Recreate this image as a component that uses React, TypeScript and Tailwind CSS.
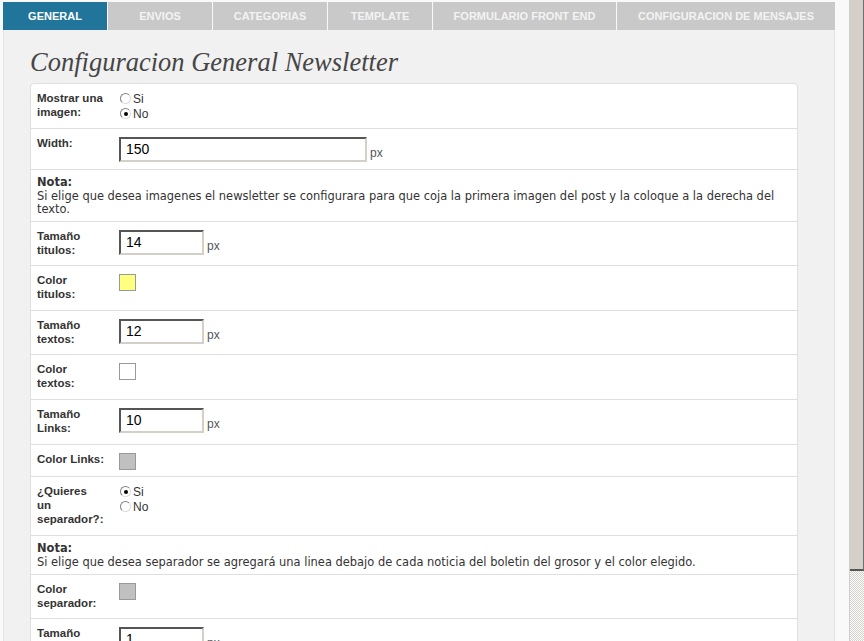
import React from "react";

const tabs: { label: string; w: string; active?: boolean }[] = [
  { label: "GENERAL", w: "w-[104px]", active: true },
  { label: "ENVIOS", w: "w-[104px]" },
  { label: "CATEGORIAS", w: "w-[114px]" },
  { label: "TEMPLATE", w: "w-[104px]" },
  { label: "FORMULARIO FRONT END", w: "w-[183px]" },
  { label: "CONFIGURACION DE MENSAJES", w: "w-[218px]" },
];

function Row({ h, label, children }: { h: string; label: React.ReactNode; children?: React.ReactNode }) {
  return (
    <div className={`flex border-b border-[#dfdfdf] ${h}`}>
      <div className="w-[88px] shrink-0 pl-[6px] pt-[7px] text-[11.5px] leading-[14px] font-bold text-[#333]">
        {label}
      </div>
      <div className="flex-1">{children}</div>
    </div>
  );
}

function TextInput({ value, w }: { value: string; w: string }) {
  return (
    <div className="flex items-end pt-[8px]">
      <div
        className={`${w} h-[25px] border-2 border-t-[#555] border-l-[#555] border-b-[#d4d0c8] border-r-[#d4d0c8] bg-white pl-[5px] text-[14px] leading-[21px] text-black`}
      >
        {value}
      </div>
      <span className="ml-[3px] mb-[2px] text-[12px] leading-[14px] text-[#555]">px</span>
    </div>
  );
}

function Swatch({ color }: { color: string }) {
  return (
    <div className="pt-[8px]">
      <div className={`w-[17px] h-[17px] border border-[#999] ${color}`} />
    </div>
  );
}

function Radio({ checked, label }: { checked?: boolean; label: string }) {
  return (
    <div className="flex items-center h-[15px] text-[12px] text-[#333]">
      <span className="ml-[1px] w-[11px] h-[11px] rounded-full border border-[#808080] border-b-[#ddd] border-r-[#ddd] bg-white flex items-center justify-center">
        {checked ? <span className="w-[4px] h-[4px] rounded-full bg-black" /> : null}
      </span>
      <span className="ml-[2px]">{label}</span>
    </div>
  );
}

function Nota({ h, lines }: { h: string; lines: string[] }) {
  return (
    <div
      className={`${h} border-b border-[#dfdfdf] pl-[6px] pt-[6px] text-[11.45px] leading-[13.5px] text-[#333] whitespace-nowrap`}
      style={{ fontFamily: '"DejaVu Sans", Verdana, sans-serif' }}
    >
      <div className="font-bold">Nota:</div>
      {lines.map((l, i) => (
        <div key={i}>{l}</div>
      ))}
    </div>
  );
}

export default function App() {
  return (
    <div
      className="flex h-[641px] w-[864px] overflow-hidden bg-[#f9f9f9]"
      style={{ fontFamily: '"Liberation Sans", Arial, sans-serif' }}
    >
      <div className="w-[849px] shrink-0 pt-[2px] pl-[3px]">
        <div className="w-[832px] flex h-[28px] gap-[1px]">
          {tabs.map((t) => (
            <div
              key={t.label}
              className={`${t.w} shrink-0 flex items-center justify-center text-[11px] font-bold ${
                t.active ? "bg-[#21759b] text-white" : "bg-[#c9c9c9] text-[#f3f3f3]"
              }`}
            >
              {t.label}
            </div>
          ))}
        </div>
        <div className="w-[832px] h-[620px] bg-[#f1f1f1] border-l border-r border-[#e3e3e3] pl-[26px]">
          <h2
            className="pt-[17px] pb-[5px] text-[26.5px] leading-[31px] italic text-[#464646]"
            style={{ fontFamily: '"Liberation Serif", Georgia, serif' }}
          >
            Configuracion General Newsletter
          </h2>
          <div className="w-[768px] bg-white border border-[#dfdfdf] rounded-t-[4px] h-[600px]">
            <Row h="h-[45px]" label={<>Mostrar una<br />imagen:</>}>
              <div className="pt-[7px]">
                <Radio label="Si" />
                <Radio label="No" checked />
              </div>
            </Row>
            <Row h="h-[41px]" label="Width:">
              <TextInput value="150" w="w-[248px]" />
            </Row>
            <Nota
              h="h-[52px]"
              lines={[
                "Si elige que desea imagenes el newsletter se configurara para que coja la primera imagen del post y la coloque a la derecha del",
                "texto.",
              ]}
            />
            <Row h="h-[44px]" label={<>Tamaño<br />titulos:</>}>
              <TextInput value="14" w="w-[85px]" />
            </Row>
            <Row h="h-[45px]" label={<>Color<br />titulos:</>}>
              <Swatch color="bg-[#ffff80]" />
            </Row>
            <Row h="h-[44px]" label={<>Tamaño<br />textos:</>}>
              <TextInput value="12" w="w-[85px]" />
            </Row>
            <Row h="h-[45px]" label={<>Color<br />textos:</>}>
              <Swatch color="bg-white" />
            </Row>
            <Row h="h-[45px]" label={<>Tamaño<br />Links:</>}>
              <TextInput value="10" w="w-[85px]" />
            </Row>
            <Row h="h-[32px]" label="Color Links:">
              <Swatch color="bg-[#c0c0c0]" />
            </Row>
            <Row h="h-[59px]" label={<>¿Quieres<br />un<br />separador?:</>}>
              <div className="pt-[7px]">
                <Radio label="Si" checked />
                <Radio label="No" />
              </div>
            </Row>
            <Nota
              h="h-[39px]"
              lines={[
                "Si elige que desea separador se agregará una linea debajo de cada noticia del boletin del grosor y el color elegido.",
              ]}
            />
            <Row h="h-[44px]" label={<>Color<br />separador:</>}>
              <Swatch color="bg-[#c0c0c0]" />
            </Row>
            <Row h="h-[45px]" label={<>Tamaño<br />separador:</>}>
              <TextInput value="1" w="w-[85px]" />
            </Row>
          </div>
        </div>
      </div>
      <div className="w-[15px] shrink-0 flex flex-col border-l border-[#cfcfcf]">
        <div className="h-[571px] bg-[#d4d0c8] border-r border-r-[#6f6f6f] border-b-2 border-b-[#555]" />
        <div className="flex-1 bg-[repeating-conic-gradient(#d4d0c8_0_25%,#ffffff_0_50%)] bg-[length:2px_2px]" />
      </div>
    </div>
  );
}
